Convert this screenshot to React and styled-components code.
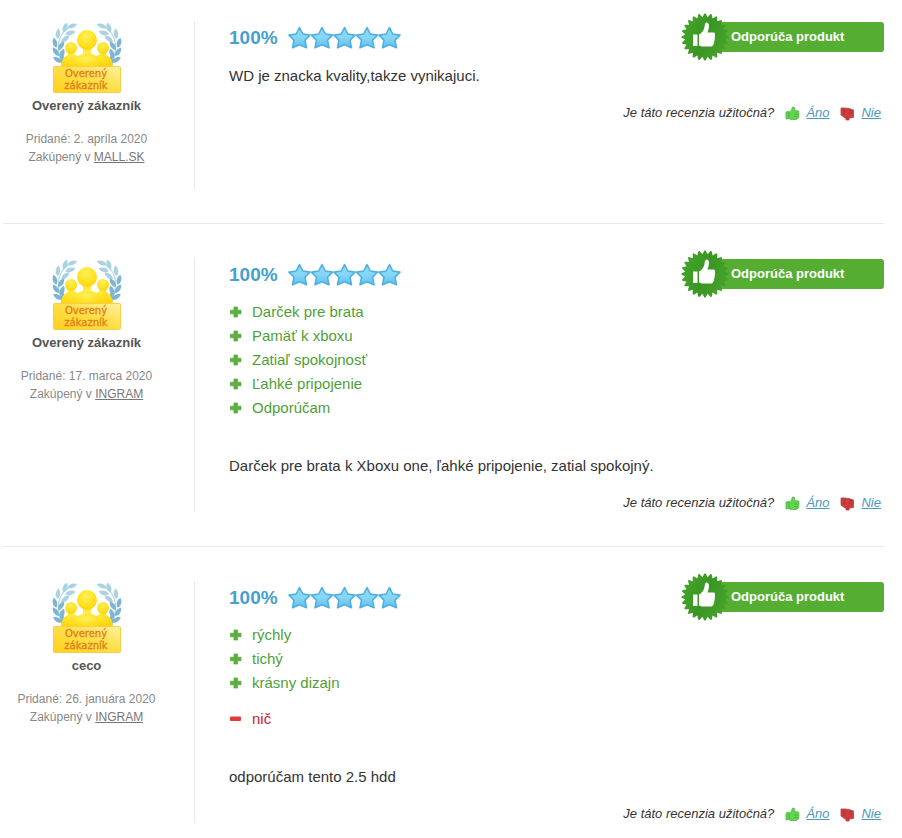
import React from "react"
import styled, { createGlobalStyle } from "styled-components"

const GlobalStyle = createGlobalStyle`
  body {
    margin: 0;
    background: #ffffff;
    font-family: "Liberation Sans", Arial, sans-serif;
    color: #333333;
  }
`

const Page = styled.main`
  padding: 21px 18px 14px 3px;
`

const Review = styled.article`
  display: flex;
  padding-bottom: 34px;
  border-bottom: 1px solid #e9e9e9;

  & + & {
    padding-top: 34px;
  }
  &:last-child {
    padding-bottom: 0;
    border-bottom: 0;
  }
`

const Author = styled.div`
  flex: 0 0 192px;
  box-sizing: border-box;
  min-height: 168px;
  padding-right: 24px;
  border-right: 1px solid #e9e9e9;
  text-align: center;
  font-size: 12px;
  line-height: 18px;
  color: #888888;

  svg {
    display: block;
    margin: 0 auto;
  }
  h3 {
    margin: 0 0 14px;
    font-size: 13px;
    line-height: 20px;
    color: #555555;
  }
  p {
    margin: 0;
  }
  a {
    color: #777777;
  }
`

const Content = styled.div`
  flex: 1;
  min-width: 0;
  padding-left: 34px;
`

const Header = styled.div`
  display: flex;
  align-items: flex-start;
  justify-content: space-between;
`

const Rating = styled.div`
  display: flex;
  align-items: center;
  gap: 10px;
  font-size: 19px;
  font-weight: bold;
  line-height: 34px;
  color: #45a0cb;
`

const Recommend = styled.div`
  position: relative;
  box-sizing: border-box;
  width: 180px;
  margin-top: 1px;
  padding-left: 27px;
  border-radius: 3px;
  background: #55ae32;
  color: #ffffff;
  font-size: 13px;
  font-weight: bold;
  line-height: 30px;

  svg {
    position: absolute;
    top: -9px;
    left: -23px;
  }
`

const PointList = styled.ul`
  margin: ${props => (props.$minus ? "12px" : "8px")} 0 0;
  padding: 0;
  list-style: none;
  font-size: 15px;
  line-height: 24px;
  color: ${props => (props.$minus ? "#c9232d" : "#4f9f38")};

  li {
    display: flex;
    align-items: center;
    gap: 10px;
  }
`

const Text = styled.p`
  margin: ${props => (props.$spaced ? "34px" : "9px")} 0 0;
  font-size: 15px;
  line-height: 24px;
`

const Helpful = styled.div`
  display: flex;
  align-items: center;
  justify-content: flex-end;
  margin-top: 16px;
  padding-right: 3px;
  font-size: 13px;
  font-style: italic;
  line-height: 18px;

  svg {
    margin: 0 6px 0 11px;
  }
  a {
    color: #4799bd;
  }
`

// teeth of the seal edge, each one a small flat tip between two notches
const sealTeeth = Array.from({ length: 24 }, (_, i) => {
  const point = (r, step) => {
    const a = ((i + step) * Math.PI) / 12
    return `${(24 + r * Math.sin(a)).toFixed(2)},${(24 - r * Math.cos(a)).toFixed(2)}`
  }
  return `${point(20, -0.5)} ${point(23.6, -0.1)} ${point(23.6, 0.1)}`
}).join(" ")

const Seal = () => (
  <svg width="48" height="48" viewBox="0 0 48 48" aria-hidden="true">
    <defs>
      <linearGradient id="seal" x1="0" y1="0.3" x2="1" y2="0.7">
        <stop offset="0" stopColor="#43a528" />
        <stop offset="0.5" stopColor="#3a9524" />
        <stop offset="1" stopColor="#48a32d" />
      </linearGradient>
    </defs>
    <polygon points={sealTeeth} fill="url(#seal)" />
    <path d="M12 21.500h4.500v11.500h-4.500z" fill="#ffffff" />
    <path
      d="M18 21.500C20.500 20.500 22.500 17.500 23.300 15C23.900 12 24 9.500 25.500 9.500C28 9.500 28.300 12.500 27.800 15C27.500 17 26.800 18 26.500 19.500H32.500C34.200 19.500 34.300 22 34 23.500C33.800 26.500 33.200 29.500 32.500 31.500C32 33 31 33.500 29.500 33.500H22C20.500 33.500 19.500 33 18 32.500Z"
      fill="#ffffff"
    />
  </svg>
)

const Thumb = ({ down }) => (
  <svg width="15" height="15" viewBox="0 0 15 15" aria-hidden="true">
    <g transform={down ? "translate(0 15) scale(1 -1)" : undefined}>
      <path
        d={
          down
            ? "M1 6L5 3H9L13.500 3.500V11L9 12.500L5 13L1 13ZM6 4V1H9L9.500 4Z"
            : "M1 6L3.500 5.500L5 6L6.500 4L7.500 1L9.500 1.500L9.500 4.500L13.500 5L14 8L13.500 12L11 13.500H6L4 12.500L1 13Z"
        }
        fill={down ? "#cc3d3d" : "#63d350"}
        stroke={down ? "#b94040" : "#4bb73f"}
        strokeWidth="0.8"
      />
      <path d="M4 6V12.500M9 8h4M9 10.500h4" stroke={down ? "#a63333" : "#45b33a"} strokeWidth="0.8" />
    </g>
  </svg>
)

const Stars = () => (
  <svg width="114" height="24" viewBox="0 0 114 24" role="img" aria-label="5 / 5">
    <defs>
      <linearGradient id="star" x1="0" y1="0" x2="0" y2="1">
        <stop offset="0" stopColor="#8fd8f6" />
        <stop offset="0.5" stopColor="#86d6f7" />
        <stop offset="1" stopColor="#5dbff0" />
      </linearGradient>
    </defs>
    {[0, 1, 2, 3, 4].map(i => (
      <path
        key={i}
        d="M11.500 1.500L14.800 8L22 9.100L17 14.200L18.500 21.800L11.500 18.800L4.500 21.800L6 14.200L1 9.100L8.200 8Z"
        transform={`translate(${i * 22.5} 0)`}
        fill="url(#star)"
        stroke="#4fb0e0"
        strokeWidth="1.6"
        strokeLinejoin="round"
      />
    ))}
  </svg>
)

const PointIcon = ({ minus }) => (
  <svg width="13" height="12" viewBox="0 0 13 12" aria-hidden="true">
    {minus ? (
      <rect x="1" y="3.500" width="11" height="4.500" rx="1" fill="#e23a38" />
    ) : (
      <path
        d="M5 1h3.500v3.200h3.500v3.600H8.500V11H5V7.800H1.500V4.200H5z"
        fill="#5bad3f"
        stroke="#5bad3f"
        strokeWidth="0.8"
        strokeLinejoin="round"
      />
    )}
  </svg>
)

// x, y, rotation of each leaf
const leaves = [
  [20, 5, 70],
  [13, 7, 20],
  [18, 12, 75],
  [6, 13, 5],
  [13, 18, 50],
  [3, 22, -15],
  [9, 25, 35],
  [4, 31, -35],
  [10, 33, 20],
  [6, 39, -60],
  [11, 40, 0],
]

const Laurel = () => (
  <g>
    <path d="M21 4C6 11 3 25 10 42" fill="none" stroke="#b4d7e7" strokeWidth="1.200" />
    {leaves.map(([x, y, angle]) => (
      <path
        key={`${x}-${y}`}
        d="M0 -5.500C3 -2.500 3 2.500 0 5C-3 2.500 -3 -2.500 0 -5.500Z"
        transform={`translate(${x} ${y}) rotate(${angle})`}
        fill={y > 19 ? "#7db5d2" : "#a9d2e4"}
      />
    ))}
  </g>
)

const CustomerBadge = () => (
  <svg width="70" height="75" viewBox="0 0 70 75" role="img" aria-label="Overený zákazník">
    <defs>
      <radialGradient id="person" cx="0.45" cy="0.3" r="0.8">
        <stop offset="0" stopColor="#fff05a" />
        <stop offset="0.6" stopColor="#ffe01f" />
        <stop offset="1" stopColor="#fccd0c" />
      </radialGradient>
      <linearGradient id="plate" x1="0" y1="1" x2="1" y2="0">
        <stop offset="0" stopColor="#ffcf1c" />
        <stop offset="0.55" stopColor="#ffe04a" />
        <stop offset="1" stopColor="#fff0a0" />
      </linearGradient>
    </defs>
    <Laurel />
    <g transform="translate(70 0) scale(-1 1)">
      <Laurel />
    </g>
    <g fill="url(#person)">
      <path d="M9 47C9 40 11 36 16 34V30H22V33L27 36L31 33V28H39V33L43 36L48 33V30H54V34C59 36 61 40 61 47Z" />
      <circle cx="19" cy="27" r="6" />
      <circle cx="51" cy="27" r="6" />
      <path d="M19 47C19 38 24 35 31 33H39C46 35 51 38 51 47Z" />
      <circle cx="35" cy="19" r="10" />
    </g>
    <rect x="1.500" y="45.500" width="67" height="26" rx="1" fill="url(#plate)" stroke="#f6cf4a" />
    <g
      fill="#de7f16"
      fontFamily='"DejaVu Sans", Verdana, sans-serif'
      fontSize="10"
      stroke="#de7f16"
      strokeWidth="0.3"
      textAnchor="middle"
    >
      <text x="34" y="56">Overený</text>
      <text x="34" y="68">zákazník</text>
    </g>
  </svg>
)

const reviews = [
  {
    name: "Overený zákazník",
    date: "2. apríla 2020",
    shop: "MALL.SK",
    pros: [],
    cons: [],
    text: "WD je znacka kvality,takze vynikajuci.",
  },
  {
    name: "Overený zákazník",
    date: "17. marca 2020",
    shop: "INGRAM",
    pros: ["Darček pre brata", "Pamäť k xboxu", "Zatiaľ spokojnosť", "Ľahké pripojenie", "Odporúčam"],
    cons: [],
    text: "Darček pre brata k Xboxu one, ľahké pripojenie, zatial spokojný.",
  },
  {
    name: "ceco",
    date: "26. januára 2020",
    shop: "INGRAM",
    pros: ["rýchly", "tichý", "krásny dizajn"],
    cons: ["nič"],
    text: "odporúčam tento 2.5 hdd",
  },
]

const Points = ({ items, minus }) => {
  if (!items.length) return null
  return (
    <PointList $minus={minus}>
      {items.map(item => (
        <li key={item}>
          <PointIcon minus={minus} />
          {item}
        </li>
      ))}
    </PointList>
  )
}

const App = () => (
  <React.Fragment>
    <GlobalStyle />
    <Page>
      {reviews.map(review => (
        <Review key={review.date}>
          <Author>
            <CustomerBadge />
            <h3>{review.name}</h3>
            <p>Pridané: {review.date}</p>
            <p>
              Zakúpený v <a href="#shop">{review.shop}</a>
            </p>
          </Author>
          <Content>
            <Header>
              <Rating>
                100%
                <Stars />
              </Rating>
              <Recommend>
                <Seal />
                Odporúča produkt
              </Recommend>
            </Header>
            <Points items={review.pros} />
            <Points items={review.cons} minus />
            <Text $spaced={review.pros.length > 0}>{review.text}</Text>
            <Helpful>
              Je táto recenzia užitočná?
              <Thumb />
              <a href="#ano">Áno</a>
              <Thumb down />
              <a href="#nie">Nie</a>
            </Helpful>
          </Content>
        </Review>
      ))}
    </Page>
  </React.Fragment>
)

export default App
